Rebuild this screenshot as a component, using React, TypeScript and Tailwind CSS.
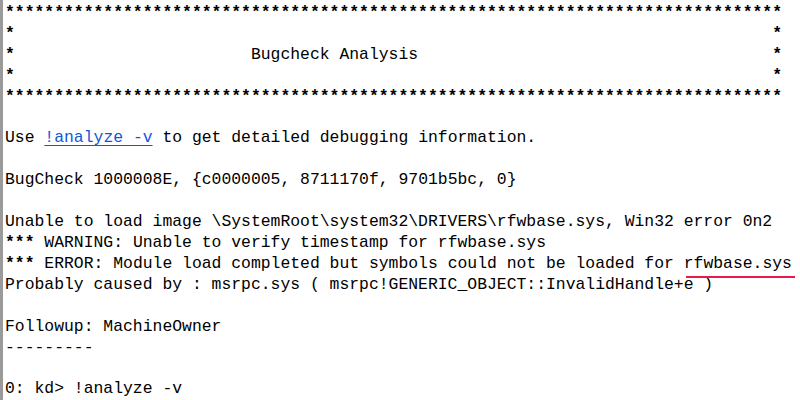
import React from "react";

const stars = "*".repeat(79);
const side = "*" + " ".repeat(77) + "*";
const title = "*" + " ".repeat(24) + "Bugcheck Analysis" + " ".repeat(36) + "*";

export default function App() {
  return (
    <div className="w-[800px] h-[400px] bg-white overflow-hidden flex">
      <div className="w-[3px] h-full bg-[#9a9a9a] shrink-0" />
      <div
        className="pl-[2px] pt-[3px] text-black whitespace-pre text-[16.4px] leading-[20.9px]"
        style={{ fontFamily: '"Liberation Mono", "DejaVu Sans Mono", monospace' }}
      >
        <div className="font-bold">{stars}</div>
        <div className="font-bold">{side}</div>
        <div>
          <span className="font-bold">*</span>
          {" ".repeat(24) + "Bugcheck Analysis" + " ".repeat(36)}
          <span className="font-bold">*</span>
        </div>
        <div className="font-bold">{side}</div>
        <div className="font-bold">{stars}</div>
        <div>{" "}</div>
        <div>
          Use{" "}
          <span className="text-[#1256d8] underline underline-offset-[3px]">!analyze -v</span>
          {" to get detailed debugging information."}
        </div>
        <div>{" "}</div>
        <div>BugCheck 1000008E, {"{"}c0000005, 8711170f, 9701b5bc, 0{"}"}</div>
        <div>{" "}</div>
        <div>{"Unable to load image \\SystemRoot\\system32\\DRIVERS\\rfwbase.sys, Win32 error 0n2"}</div>
        <div>
          <span className="font-bold">***</span>
          {" WARNING: Unable to verify timestamp for rfwbase.sys"}
        </div>
        <div>
          <span className="font-bold">***</span>
          {" ERROR: Module load completed but symbols could not be loaded for "}
          <span className="relative inline-block">
            rfwbase.sys
            <span className="absolute left-[2px] right-[-3px] bottom-[-3px] h-[2px] bg-[#e8194c]" />
          </span>
        </div>
        <div>{"Probably caused by : msrpc.sys ( msrpc!GENERIC_OBJECT::InvalidHandle+e )"}</div>
        <div>{" "}</div>
        <div>Followup: MachineOwner</div>
        <div>---------</div>
        <div>{" "}</div>
        <div>0: kd&gt; !analyze -v</div>
      </div>
    </div>
  );
}
